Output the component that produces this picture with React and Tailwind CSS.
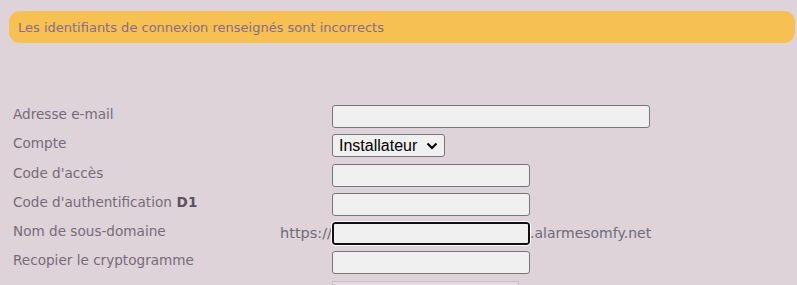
const rows = [
  { label: "Adresse e-mail", h: "h-[29px]", field: "email" },
  { label: "Compte", h: "h-[30px]", field: "select" },
  { label: "Code d'accès", h: "h-[29px]", field: "short" },
  { label: "Code d'authentification", bold: "D1", h: "h-[29px]", field: "short" },
  { label: "Nom de sous-domaine", h: "h-[29px]", field: "domain" },
  { label: "Recopier le cryptogramme", h: "h-[30px]", field: "short" },
]

function Field({ type }) {
  const base = "h-[23px] bg-[#f0f0f0] border border-[#767676] rounded-[3px]"
  if (type === "email") return <div className={`${base} w-[318px]`} />
  if (type === "select")
    return (
      <div className="h-[23px] bg-[#f0f0f0] border border-[#767676] rounded-[3px] flex items-center pl-[6px] pr-[6px] gap-[9px] font-['Liberation_Sans',Arial,sans-serif] text-[16px] text-black">
        <span>Installateur</span>
        <svg width="12" height="8" viewBox="0 0 12 8" fill="none">
          <path d="M1.5 1.5 L6 6 L10.5 1.5" stroke="#000" strokeWidth="2" />
        </svg>
      </div>
    )
  if (type === "domain")
    return (
      <div className="flex items-center">
        <div className="h-[23px] w-[198px] bg-[#f0f0f0] border-2 border-[#101010] rounded-[3px] outline outline-1 outline-white" />
        <span className="text-[14px] text-[#6f6b78] font-['DejaVu_Sans',sans-serif]">.alarmesomfy.net</span>
      </div>
    )
  return <div className={`${base} w-[198px]`} />
}

export default function App() {
  return (
    <div className="w-[797px] h-[285px] overflow-hidden bg-[#ddd3d9] font-['DejaVu_Sans',sans-serif] text-[13px] text-[#786a78]">
      <div className="pt-[11px] pl-[9px] pr-[2px]">
        <div className="h-[32px] rounded-[11px] bg-[#f6c052] flex items-center pl-[9px] pt-[2px] text-[#8a6b8a]">
          Les identifiants de connexion renseignés sont incorrects
        </div>
      </div>
      <div className="pt-[62px] pl-[13px] flex flex-col">
        {rows.map((r) => (
          <div key={r.label} className={`${r.h} flex items-start`}>
            <div className="w-[265px] text-[13.6px] leading-[18px]">
              {r.label}
              {r.bold && <b className="text-[#5f505f]"> {r.bold}</b>}
            </div>
            <div className="w-[54px] text-right text-[14.5px] text-[#6f6b78] leading-[22px]">
              {r.field === "domain" ? "https://" : ""}
            </div>
            <Field type={r.field} />
          </div>
        ))}
        <div className="flex">
          <div className="w-[319px]" />
          <div className="w-[187px] h-[30px] border border-[#c8c0c6] bg-[#e2dadf]" />
        </div>
      </div>
    </div>
  )
}
